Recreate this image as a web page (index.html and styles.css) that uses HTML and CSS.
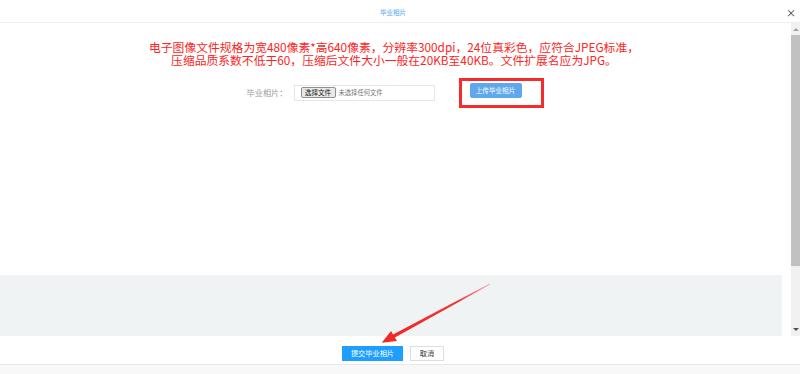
FILE: index.html
```html
<!DOCTYPE html>
<html lang="zh-CN">
<head>
    <meta charset="UTF-8">
    <title>毕业相片</title>
    <link rel="stylesheet" href="styles.css">
</head>
<body>
    <div class="dialog">
        <div class="dialog-title">
            <span class="title-text">毕业相片</span>
            <span class="close">×</span>
        </div>
        <div class="dialog-main">
            <div class="content">
                <div class="notice">
                    <div>电子图像文件规格为宽480像素*高640像素，分辨率300dpi，24位真彩色，应符合JPEG标准，</div>
                    <div>压缩品质系数不低于60，压缩后文件大小一般在20KB至40KB。文件扩展名应为JPG。</div>
                </div>
                <div class="upload-row">
                    <span class="label">毕业相片：</span>
                    <div class="file-box">
                        <span class="file-btn">选择文件</span>
                        <span class="file-name">未选择任何文件</span>
                    </div>
                    <div class="mark-box">
                        <span class="upload-btn">上传毕业相片</span>
                    </div>
                </div>
                <div class="filler"></div>
                <div class="gray-panel"></div>
            </div>
            <div class="scrollbar">
                <span class="arrow-up"></span>
                <span class="thumb"></span>
                <span class="arrow-down"></span>
            </div>
        </div>
        <div class="dialog-footer">
            <span class="btn btn-primary">提交毕业相片</span>
            <span class="btn btn-default">取消</span>
        </div>
        <div class="footer-strip"></div>
    </div>
    <svg class="annotation" width="800" height="374" viewBox="0 0 800 374">
        <defs>
            <linearGradient id="fade" x1="490" y1="284" x2="382" y2="343" gradientUnits="userSpaceOnUse">
                <stop offset="0" stop-color="#f23030" stop-opacity="0.3"/>
                <stop offset="0.3" stop-color="#f23030"/>
                <stop offset="1" stop-color="#f02828"/>
            </linearGradient>
        </defs>
        <polygon fill="url(#fade)" points="490.2,284.4 394.9,337.4 397,341 381.7,342.8 391,331 393.1,334.6 489.8,283.6"/>
    </svg>
</body>
</html>
```

FILE: styles.css
```css
body {
    margin: 0;
    font-family: "Noto Sans CJK SC", "Noto Sans", sans-serif;
    background-color: #fff;
}
.dialog {
    width: 800px;
    height: 374px;
    display: flex;
    flex-direction: column;
}
.dialog-title {
    height: 22px;
    border-bottom: 1px solid #eee;
    display: flex;
    align-items: center;
    justify-content: center;
    position: relative;
}
.title-text {
    font-size: 6.5px;
    color: #4a9ff0;
    margin-left: -14px;
    margin-top: 2px;
}
.close {
    position: absolute;
    left: 786px;
    top: 7px;
    font-size: 10px;
    line-height: 12px;
    color: #333;
}
.dialog-main {
    height: 313px;
    display: flex;
}
.content {
    width: 782px;
    display: flex;
    flex-direction: column;
}
.notice {
    margin-top: 17px;
    padding-left: 6px;
    text-align: center;
    font-size: 11.8px;
    line-height: 13px;
    color: #fb2424;
}
.upload-row {
    margin-top: 12px;
    padding-left: 8px;
    display: flex;
    align-items: center;
    justify-content: center;
}
.label {
    width: 42px;
    font-size: 8.2px;
    color: #999;
    margin-top: -3px;
}
.file-box {
    width: 139px;
    height: 14px;
    margin-left: 5px;
    border: 1px solid #e6e6e6;
    display: flex;
    align-items: center;
    margin-top: -1px;
}
.file-btn {
    margin-left: 6px;
    height: 9px;
    width: 33px;
    border: 1px solid #8f8f8f;
    border-radius: 2px;
    background-color: #e9e9e9;
    font-size: 6.6px;
    line-height: 9px;
    text-align: center;
    color: #111;
}
.file-name {
    margin-left: 3px;
    font-size: 6.3px;
    color: #777;
}
.mark-box {
    margin-left: 24px;
    border: 3px solid #f42c2c;
    padding: 2px 19px 7px 8px;
}
.upload-btn {
    display: block;
    width: 52px;
    height: 15px;
    border-radius: 2px;
    background-color: #5fa8ec;
    color: #fff;
    font-size: 6.6px;
    line-height: 15px;
    text-align: center;
}
.filler {
    flex: 1;
}
.gray-panel {
    height: 61px;
    background-color: #f0f3f4;
}
.scrollbar {
    margin-left: 9px;
    width: 9px;
    background-color: #f1f1f1;
    display: flex;
    flex-direction: column;
    align-items: center;
}
.arrow-up {
    margin-top: 5px;
    width: 0;
    height: 0;
    border-left: 3px solid transparent;
    border-right: 3px solid transparent;
    border-bottom: 3px solid #a3a3a3;
}
.thumb {
    margin-top: 4px;
    width: 9px;
    height: 231px;
    background-color: #c1c1c1;
}
.arrow-down {
    margin-top: 62px;
    width: 0;
    height: 0;
    border-left: 3px solid transparent;
    border-right: 3px solid transparent;
    border-top: 3px solid #505050;
}
.dialog-footer {
    height: 28px;
    display: flex;
    justify-content: center;
    align-items: flex-start;
    padding-top: 10px;
    padding-right: 14px;
    box-sizing: border-box;
    gap: 7px;
}
.btn {
    height: 15px;
    font-size: 7.2px;
    line-height: 15px;
    text-align: center;
    box-sizing: border-box;
}
.btn-primary {
    width: 61px;
    background-color: #1e9fff;
    color: #fff;
}
.btn-default {
    width: 34px;
    border: 1px solid #dedede;
    line-height: 13px;
    color: #333;
}
.footer-strip {
    flex: 1;
    border-top: 1px solid #e8e8e8;
    background-color: #f8f8f8;
}
.annotation {
    position: absolute;
    left: 0;
    top: 0;
    pointer-events: none;
}
```
